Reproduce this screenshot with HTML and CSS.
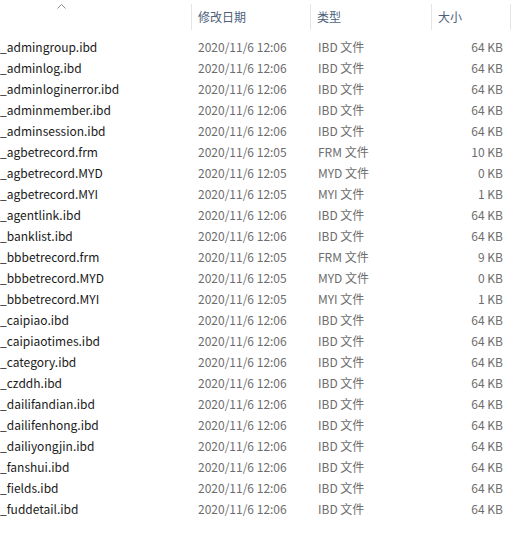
FILE: index.html
```html
<!DOCTYPE html>
<html>
<head>
<meta charset="utf-8">
<link rel="stylesheet" href="styles.css">
</head>
<body>
<div class="list">
  <div class="header">
    <div class="hcell hname"><svg class="sort" width="9" height="5" viewBox="0 0 9 5"><path d="M0.5 4.5 L4.5 0.5 L8.5 4.5" fill="none" stroke="#8a8a8a" stroke-width="1"/></svg></div>
    <div class="hcell hdate">修改日期</div>
    <div class="hcell">类型</div>
    <div class="hcell">大小</div>
  </div>
  <div class="rows">
    <div class="row"><div class="cell name">_admingroup.ibd</div><div class="cell date">2020/11/6 12:06</div><div class="cell type">IBD 文件</div><div class="cell size">64 KB</div></div>
    <div class="row"><div class="cell name">_adminlog.ibd</div><div class="cell date">2020/11/6 12:06</div><div class="cell type">IBD 文件</div><div class="cell size">64 KB</div></div>
    <div class="row"><div class="cell name">_adminloginerror.ibd</div><div class="cell date">2020/11/6 12:06</div><div class="cell type">IBD 文件</div><div class="cell size">64 KB</div></div>
    <div class="row"><div class="cell name">_adminmember.ibd</div><div class="cell date">2020/11/6 12:06</div><div class="cell type">IBD 文件</div><div class="cell size">64 KB</div></div>
    <div class="row"><div class="cell name">_adminsession.ibd</div><div class="cell date">2020/11/6 12:06</div><div class="cell type">IBD 文件</div><div class="cell size">64 KB</div></div>
    <div class="row"><div class="cell name">_agbetrecord.frm</div><div class="cell date">2020/11/6 12:05</div><div class="cell type">FRM 文件</div><div class="cell size">10 KB</div></div>
    <div class="row"><div class="cell name">_agbetrecord.MYD</div><div class="cell date">2020/11/6 12:05</div><div class="cell type">MYD 文件</div><div class="cell size">0 KB</div></div>
    <div class="row"><div class="cell name">_agbetrecord.MYI</div><div class="cell date">2020/11/6 12:05</div><div class="cell type">MYI 文件</div><div class="cell size">1 KB</div></div>
    <div class="row"><div class="cell name">_agentlink.ibd</div><div class="cell date">2020/11/6 12:06</div><div class="cell type">IBD 文件</div><div class="cell size">64 KB</div></div>
    <div class="row"><div class="cell name">_banklist.ibd</div><div class="cell date">2020/11/6 12:06</div><div class="cell type">IBD 文件</div><div class="cell size">64 KB</div></div>
    <div class="row"><div class="cell name">_bbbetrecord.frm</div><div class="cell date">2020/11/6 12:05</div><div class="cell type">FRM 文件</div><div class="cell size">9 KB</div></div>
    <div class="row"><div class="cell name">_bbbetrecord.MYD</div><div class="cell date">2020/11/6 12:05</div><div class="cell type">MYD 文件</div><div class="cell size">0 KB</div></div>
    <div class="row"><div class="cell name">_bbbetrecord.MYI</div><div class="cell date">2020/11/6 12:05</div><div class="cell type">MYI 文件</div><div class="cell size">1 KB</div></div>
    <div class="row"><div class="cell name">_caipiao.ibd</div><div class="cell date">2020/11/6 12:06</div><div class="cell type">IBD 文件</div><div class="cell size">64 KB</div></div>
    <div class="row"><div class="cell name">_caipiaotimes.ibd</div><div class="cell date">2020/11/6 12:06</div><div class="cell type">IBD 文件</div><div class="cell size">64 KB</div></div>
    <div class="row"><div class="cell name">_category.ibd</div><div class="cell date">2020/11/6 12:06</div><div class="cell type">IBD 文件</div><div class="cell size">64 KB</div></div>
    <div class="row"><div class="cell name">_czddh.ibd</div><div class="cell date">2020/11/6 12:06</div><div class="cell type">IBD 文件</div><div class="cell size">64 KB</div></div>
    <div class="row"><div class="cell name">_dailifandian.ibd</div><div class="cell date">2020/11/6 12:06</div><div class="cell type">IBD 文件</div><div class="cell size">64 KB</div></div>
    <div class="row"><div class="cell name">_dailifenhong.ibd</div><div class="cell date">2020/11/6 12:06</div><div class="cell type">IBD 文件</div><div class="cell size">64 KB</div></div>
    <div class="row"><div class="cell name">_dailiyongjin.ibd</div><div class="cell date">2020/11/6 12:06</div><div class="cell type">IBD 文件</div><div class="cell size">64 KB</div></div>
    <div class="row"><div class="cell name">_fanshui.ibd</div><div class="cell date">2020/11/6 12:06</div><div class="cell type">IBD 文件</div><div class="cell size">64 KB</div></div>
    <div class="row"><div class="cell name">_fields.ibd</div><div class="cell date">2020/11/6 12:06</div><div class="cell type">IBD 文件</div><div class="cell size">64 KB</div></div>
    <div class="row"><div class="cell name">_fuddetail.ibd</div><div class="cell date">2020/11/6 12:06</div><div class="cell type">IBD 文件</div><div class="cell size">64 KB</div></div>
  </div>
</div>
</body>
</html>
```
FILE: styles.css
```css
html, body {
  margin: 0;
  padding: 0;
  background: #ffffff;
}
body {
  font-family: "Noto Sans CJK SC", "Noto Sans", sans-serif;
  font-size: 12px;
}
.list {
  width: 529px;
}
.header {
  display: grid;
  grid-template-columns: 191px 120px 121px 79px;
  height: 36px;
  align-items: start;
}
.hcell {
  height: 26px;
  margin-top: 4px;
  border-right: 1px solid #e5e5e5;
  padding-left: 6px;
  color: #4c607a;
  line-height: 26px;
  box-sizing: border-box;
}
.hname {
  position: relative;
  border-right: none;
}
.hdate {
  border-left: 1px solid #e5e5e5;
}
.sort {
  position: absolute;
  left: 57px;
  top: 0px;
}
.rows {
  display: flex;
  flex-direction: column;
}
.row {
  display: grid;
  grid-template-columns: 191px 120px 121px 79px;
  height: 21px;
  line-height: 21px;
}
.cell {
  white-space: nowrap;
  overflow: hidden;
}
.name {
  color: #1a1a1a;
}
.date, .type {
  color: #6d6d6d;
  padding-left: 7px;
}
.size {
  color: #6d6d6d;
  text-align: right;
  padding-right: 8px;
}
```
